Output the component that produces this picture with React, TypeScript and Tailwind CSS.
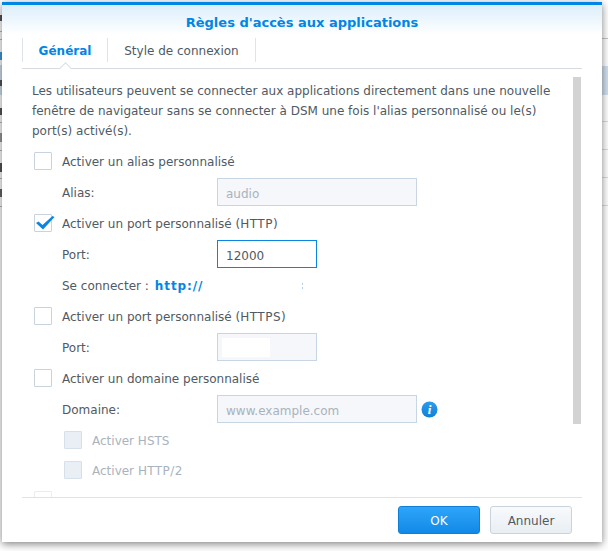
import React from 'react';

const font = "font-['DejaVu_Sans',sans-serif]";

// bits of the window behind the dialog, visible in the strips at both sides
const leftStrip = [
  'h-[15px]', 'h-[6px] bg-[#555]', 'h-[10px]', 'h-[1px] bg-[#bbb]', 'h-[7px]', 'h-[1px] bg-[#bbb]', 'h-[12px]',
  'h-[8px] bg-[#3f9ad8]', 'h-[5px]', 'h-[15px] bg-[#cddfee]', 'h-[6px] bg-[#555]', 'h-[9px] bg-[#cddfee]', 'h-[13px]',
  'h-[7px] bg-[#555]', 'h-[7px]', 'h-[1px] bg-[#bbb]', 'h-[10px]', 'h-[9px] bg-[#999]', 'h-[8px]', 'h-[1px] bg-[#bbb]',
  'h-[12px]', 'h-[9px] bg-[#555]', 'h-[6px]', 'h-[1px] bg-[#bbb]', 'h-[10px]', 'h-[8px] bg-[#666]', 'h-[9px]', 'h-[1px] bg-[#bbb]',
];

const rightStrip = [
  'h-[39px] border-b border-[#c4c4c4]',
  'h-[27px]',
  'h-[29px] bg-[#cfe0ee]',
  'h-[27px] border-b border-[#dcdcdc]',
  'h-[28px] border-b border-[#dcdcdc]',
  'h-[28px] border-b border-[#dcdcdc]',
  'h-[28px] border-b border-[#dcdcdc]',
];

const Check: React.FC<{ checked?: boolean; disabled?: boolean }> = ({ checked, disabled }) => (
  <span
    className={`relative block w-[18px] h-[18px] shrink-0 border rounded-[1px] ${
      disabled ? 'bg-[#e9eff5] border-[#d5e0ea]' : 'bg-white border-[#c8d3de]'
    }`}
  >
    {checked && (
      <svg className="absolute -left-[1px] -top-[1px]" width="22" height="18" viewBox="0 0 22 18">
        <path d="M2 9 L4.5 7.5 L8.5 11 L18.5 2 L20.5 3 L9 15.5 Z" fill="#0a86e0" />
      </svg>
    )}
  </span>
);

const Field: React.FC<{ className?: string; children?: React.ReactNode; active?: boolean }> = ({ className = '', children, active }) => (
  <div
    className={`h-[28px] border flex items-center px-[8px] text-[12px] ${
      active ? 'bg-white border-[#0a86e0] text-[#505a64]' : 'bg-[#f5f7fa] border-[#c8d5e2] text-[#a9b3bd]'
    } ${className}`}
  >
    {children}
  </div>
);

const CheckRow: React.FC<{ label?: React.ReactNode; checked?: boolean; disabled?: boolean; className?: string }> = ({ label, checked, disabled, className = '' }) => (
  <div className={`flex items-center gap-[10px] h-[18px] ${className}`}>
    <Check checked={checked} disabled={disabled} />
    <span className={`pt-[2px] text-[12px] whitespace-nowrap ${disabled ? 'text-[#a9b3bd]' : 'text-[#505a64]'}`}>{label}</span>
  </div>
);

const FieldRow: React.FC<{ label: string; children: React.ReactNode }> = ({ label, children }) => (
  <div className="flex items-center h-[28px] mt-[8px] pl-[30px]">
    <span className="w-[155px] pt-[2px] text-[12px] text-[#505a64]">{label}</span>
    {children}
  </div>
);

const App: React.FC = () => {
  return (
    <div className={`relative w-[608px] h-[551px] overflow-hidden bg-white flex justify-between ${font}`}>
      <div className="w-[2px] flex flex-col">
        {leftStrip.map((cls, i) => (
          <div key={i} className={cls} />
        ))}
      </div>
      <div className="w-[6px] flex flex-col">
        {rightStrip.map((cls, i) => (
          <div key={i} className={cls} />
        ))}
      </div>

      <div className="absolute left-[2px] top-[2px] w-[600px] h-[540px] flex flex-col bg-white border-t-[3px] border-[#0086e5] shadow-[0_2px_8px_rgba(0,0,0,0.5)]">
        <div className="h-[30px] shrink-0 bg-gradient-to-b from-[#dceefb] to-white flex items-center justify-center">
          <h1 className="text-[13px] font-bold text-[#0086e5] leading-none pt-[5px]">Règles d'accès aux applications</h1>
        </div>

        <div className="mx-[20px] h-[34px] shrink-0 relative flex border-b border-[#d7dbdf] pb-[6px] pt-[3px]">
          <div className="w-[86px] pt-[2px] border-x border-[#dfe4e9] flex items-center justify-center text-[12px] font-bold text-[#0086e5]">Général</div>
          <div className="w-[148px] pt-[2px] border-r border-[#dfe4e9] flex items-center justify-center text-[12px] text-[#505a64]">Style de connexion</div>
          <span className="absolute left-[37px] -bottom-[1px] w-[12px] h-[7px] overflow-hidden">
            <span className="block w-[9px] h-[9px] ml-[1.5px] mt-[2px] rotate-45 bg-white border-l border-t border-[#d7dbdf]" />
          </span>
        </div>

        <div className="h-[429px] shrink-0 mx-[20px] relative overflow-hidden border-b border-[#e0e3e6]">
          <div className="absolute right-[1px] top-[8px] w-[8px] h-[347px] bg-[#d3d3d3]" />
          <div className="pl-[10px] pt-[12px]">
            <p className="text-[12px] leading-[20px] text-[#505a64] w-[530px]">
              Les utilisateurs peuvent se connecter aux applications directement dans une nouvelle fenêtre de navigateur sans se connecter à DSM une fois l'alias personnalisé ou le(s) port(s) activé(s).
            </p>
            <CheckRow label="Activer un alias personnalisé" className="mt-[11px] ml-[2px]" />
            <FieldRow label="Alias:">
              <Field className="w-[200px]"><span className="pt-[4px]">audio</span></Field>
            </FieldRow>
            <CheckRow
              label={<>Activer un port personnalisé (<span className="tracking-[0.5px]">HTTP</span>)</>}
              checked
              className="mt-[8px] ml-[2px]"
            />
            <FieldRow label="Port:">
              <Field active className="w-[100px]"><span className="pt-[4px]">12000</span></Field>
            </FieldRow>
            <div className="flex items-center h-[18px] mt-[8px] pl-[30px] pt-[2px] text-[12px] text-[#505a64]">
              Se connecter :<span className="ml-[6px] font-bold tracking-[0.9px] text-[#0086e5]">http://</span>
              <span className="ml-[99px] flex flex-col gap-[2px]">
                <span className="block w-[1px] h-[2px] bg-[#a8cfec]" />
                <span className="block w-[1px] h-[2px] bg-[#a8cfec]" />
              </span>
            </div>
            <CheckRow
              label={<>Activer un port personnalisé (<span className="tracking-[0.5px]">HTTPS</span>)</>}
              className="mt-[13px] ml-[2px]"
            />
            <FieldRow label="Port:">
              <Field className="w-[100px]"><span className="block w-[48px] h-[19px] -ml-[4px] bg-white" /></Field>
            </FieldRow>
            <CheckRow label="Activer un domaine personnalisé" className="mt-[8px] ml-[2px]" />
            <FieldRow label="Domaine:">
              <Field className="w-[200px]"><span className="pt-[4px]">www.example.com</span></Field>
              <svg className="ml-[4px]" width="17" height="17" viewBox="0 0 17 17">
                <defs>
                  <linearGradient id="info" x1="0" y1="0" x2="0" y2="1">
                    <stop offset="0" stopColor="#2c9cee" />
                    <stop offset="1" stopColor="#1180d6" />
                  </linearGradient>
                </defs>
                <circle cx="8.5" cy="8.5" r="8" fill="url(#info)" />
                <text x="8.5" y="13" textAnchor="middle" fontFamily="Liberation Serif" fontStyle="italic" fontWeight="bold" fontSize="13" fill="#fff">i</text>
              </svg>
            </FieldRow>
            <CheckRow label="Activer HSTS" disabled className="mt-[8px] ml-[32px]" />
            <CheckRow
              label={<>Activer <span className="tracking-[0.4px]">HTTP/2</span></>}
              disabled
              className="mt-[12px] ml-[32px]"
            />
            <CheckRow className="mt-[12px] ml-[2px] opacity-40" />
          </div>
        </div>

        <div className="flex-1 flex justify-end items-start gap-[10px] pt-[8px] pr-[30px]">
          <button className="w-[82px] h-[28px] pt-[2px] rounded-[3px] border border-[#0f7fd6] bg-gradient-to-b from-[#2ea5fb] to-[#1089e6] text-[12px] text-white">OK</button>
          <button className="w-[82px] h-[28px] pt-[2px] rounded-[3px] border border-[#c8d3de] bg-gradient-to-b from-[#f8fafc] to-[#e9eef3] text-[12px] text-[#505a64]">Annuler</button>
        </div>
      </div>
    </div>
  );
};

export default App;
